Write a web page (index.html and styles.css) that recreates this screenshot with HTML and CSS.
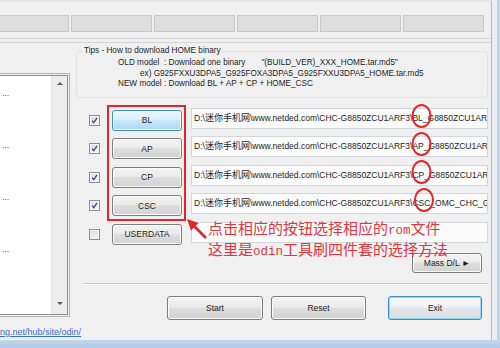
FILE: index.html
```html
<!DOCTYPE html>
<html lang="zh">
<head>
    <meta charset="UTF-8">
    <title>Odin3</title>
    <link rel="stylesheet" href="styles.css">
</head>
<body>
    <div class="window">
        <div class="client">
            <div class="ports">
                <div class="port"></div>
                <div class="port"></div>
                <div class="port"></div>
                <div class="port"></div>
                <div class="port"></div>
                <div class="port"></div>
            </div>
            <div class="tabline"></div>
            <div class="main">
                <div class="logside">
                    <div class="logframe">
                        <div class="loglist">
                            <div class="logtext">
                                <div class="logline">...</div>
                                <div class="logline">...</div>
                                <div class="logline">...</div>
                                <div class="logline">...</div>
                            </div>
                            <div class="scrollbar">
                                <span class="arrow up"></span>
                                <span class="arrow down"></span>
                            </div>
                        </div>
                    </div>
                    <a class="hublink">ng.net/hub/site/odin/</a>
                </div>
                <div class="fileside">
                    <fieldset class="tips">
                        <legend>Tips - How to download HOME binary</legend>
                        <div class="tip">OLD model&nbsp; : Download one binary<span class="quoted">"(BUILD_VER)_XXX_HOME.tar.md5"</span></div>
                        <div class="tip ex">ex) G925FXXU3DPA5_G925FOXA3DPA5_G925FXXU3DPA5_HOME.tar.md5</div>
                        <div class="tip">NEW model : Download BL + AP + CP + HOME_CSC</div>
                    </fieldset>
                    <div class="files">
                        <div class="filerow">
                            <span class="check"><svg viewBox="0 0 11 11"><path d="M2.6 5.6 L4.6 8.2 L8.6 2.4"/></svg></span>
                            <button class="btn hot">BL</button>
                            <div class="path">D:\<span class="cjk">迷你手机网</span>\www.netded.com\CHC-G8850ZCU1ARF3\BL_G8850ZCU1AR</div>
                        </div>
                        <div class="filerow">
                            <span class="check"><svg viewBox="0 0 11 11"><path d="M2.6 5.6 L4.6 8.2 L8.6 2.4"/></svg></span>
                            <button class="btn">AP</button>
                            <div class="path">D:\<span class="cjk">迷你手机网</span>\www.netded.com\CHC-G8850ZCU1ARF3\AP_G8850ZCU1AR</div>
                        </div>
                        <div class="filerow">
                            <span class="check"><svg viewBox="0 0 11 11"><path d="M2.6 5.6 L4.6 8.2 L8.6 2.4"/></svg></span>
                            <button class="btn">CP</button>
                            <div class="path">D:\<span class="cjk">迷你手机网</span>\www.netded.com\CHC-G8850ZCU1ARF3\CP_G8850ZCU1AR</div>
                        </div>
                        <div class="filerow">
                            <span class="check"><svg viewBox="0 0 11 11"><path d="M2.6 5.6 L4.6 8.2 L8.6 2.4"/></svg></span>
                            <button class="btn">CSC</button>
                            <div class="path">D:\<span class="cjk">迷你手机网</span>\www.netded.com\CHC-G8850ZCU1ARF3\CSC_OMC_CHC_G</div>
                        </div>
                        <div class="filerow">
                            <span class="check off"></span>
                            <button class="btn">USERDATA</button>
                            <div class="path"></div>
                        </div>
                    </div>
                    <div class="massrow"><button class="btn mass">Mass D/L &#9658;</button></div>
                    <div class="sep"></div>
                    <div class="actions">
                        <button class="btn action start">Start</button>
                        <button class="btn action reset">Reset</button>
                        <button class="btn action exit">Exit</button>
                    </div>
                </div>
            </div>
        </div>
    </div>

    <div class="note">点击相应的按钮选择相应的<span class="latin">rom</span>文件<br>这里是<span class="latin">odin</span>工具刷四件套的选择方法</div>

    <svg class="marks" viewBox="0 0 500 348">
        <rect x="108" y="106" width="77" height="114"/>
        <ellipse cx="421.5" cy="116" rx="9" ry="11"/>
        <ellipse cx="421.5" cy="144" rx="9" ry="11"/>
        <ellipse cx="421.5" cy="172" rx="9" ry="11"/>
        <ellipse cx="424" cy="200" rx="9" ry="11"/>
        <path class="shaft" d="M206 238 L194 226"/>
        <polygon points="187,219 198.5,223 191,230.5"/>
    </svg>
</body>
</html>
```

FILE: styles.css
```css
* {
    box-sizing: border-box;
}

html, body {
    margin: 0;
    width: 500px;
    height: 348px;
    overflow: hidden;
}

body {
    position: relative;
    font-family: "Liberation Sans", "Noto Sans CJK SC", sans-serif;
    font-size: 8.5px;
    color: #1e1e1e;
}

.window {
    width: 500px;
    height: 348px;
    background:
        linear-gradient(#c2d6ed, #b3cbe6) bottom / 100% 8px no-repeat,
        linear-gradient(to right, #eceef1 497px, #bdd3eb 497px);
}

.client {
    width: 492px;
    height: 340px;
    background: #f0f0f0;
    border-right: 1px solid #b9b9b9;
    border-top: 2px solid #e6e6e6;
    overflow: hidden;
}

/* com port boxes */
.ports {
    display: flex;
    gap: 2px;
    margin: 13px 0 0 -12px;
}

.port {
    flex: none;
    width: 81px;
    height: 17px;
    background: #dedede;
    border: 1px solid #c8c8c8;
}

.tabline {
    height: 5px;
    margin-top: 6px;
    border-top: 1px solid #d4d4d4;
    border-bottom: 1px solid #d4d4d4;
}

.main {
    display: flex;
}

/* log list on the left */
.logside {
    width: 76px;
    flex: none;
    display: flex;
    flex-direction: column;
}

.logframe {
    height: 244px;
    margin: 30px 6px 0 -10px;
    padding: 1px;
    border: 1px solid #b3b3b3;
}

.loglist {
    height: 100%;
    display: flex;
    background: #fff;
    border: 1px solid #8f8f8f;
}

.logtext {
    flex: 1;
    padding: 12px 0 0 9px;
    color: #444;
}

.logline {
    height: 10px;
    line-height: 10px;
    margin-bottom: 42px;
}

.scrollbar {
    width: 16px;
    display: flex;
    flex-direction: column;
    justify-content: space-between;
    align-items: center;
    padding: 6px 0 9px;
    background: #ededed;
    border-left: 1px solid #e2e2e2;
}

.arrow {
    width: 0;
    height: 0;
    border-left: 3px solid transparent;
    border-right: 3px solid transparent;
}

.arrow.up {
    border-bottom: 3px solid #5a5a5a;
}

.arrow.down {
    border-top: 3px solid #5a5a5a;
}

.hublink {
    margin-top: 10px;
    font-size: 9px;
    color: #3a6cc8;
    text-decoration: underline;
    white-space: nowrap;
}

/* file selection side */
.fileside {
    flex: 1;
    display: flex;
    flex-direction: column;
}

.tips {
    margin: 3px 3px 0 0;
    padding: 2px 0 7px 6px;
    border: 1px solid #dde3e8;
    border-radius: 3px;
    min-width: 0;
    font-size: 8.2px;
}

.tips legend {
    padding: 0 1px;
    line-height: 10px;
}

.tip {
    margin-left: 35px;
    line-height: 10.5px;
    white-space: nowrap;
}

.tip.ex {
    margin-left: 57px;
}

.quoted {
    margin-left: 16px;
}

.files {
    margin-top: 12px;
}

.filerow {
    display: flex;
    align-items: flex-start;
    height: 21px;
}

.filerow + .filerow {
    margin-top: 7.5px;
}

.check {
    flex: none;
    width: 11px;
    height: 11px;
    margin: 5px 0 0 13px;
    border: 1px solid #8e8f8f;
    background: linear-gradient(135deg, #dcdcdc, #f6f6f6);
    box-shadow: inset 0 0 0 1px #f4f4f4;
}

.check svg {
    display: block;
    width: 9px;
    height: 9px;
    fill: none;
    stroke: #2b4c8f;
    stroke-width: 1.6;
}

.btn {
    font: inherit;
    color: #1e1e1e;
    padding: 0;
    border: 1px solid #7d7d7d;
    border-radius: 3px;
    background: linear-gradient(#f3f3f3, #ebebeb 45%, #dedede 50%, #d2d2d2);
    box-shadow: inset 0 0 0 1px #fbfbfb;
}

.btn.hot {
    border-color: #3c8fc3;
    background: linear-gradient(#eaf6fd, #d9f0fc 45%, #c4e7fb 50%, #aed9f2);
}

.filerow .btn {
    flex: none;
    width: 70px;
    height: 21px;
    margin-left: 12px;
}

.path {
    flex: none;
    width: 297px;
    height: 21px;
    margin: -2px 0 0 9px;
    padding: 2px 0 0 2px;
    background: #fbfbfb;
    border: 1px solid #d2d5d9;
    white-space: nowrap;
    overflow: hidden;
}

.cjk {
    font-size: 9px;
}

.massrow {
    display: flex;
    justify-content: flex-end;
    margin: 8px 9px 0 0;
}

.btn.mass {
    width: 70px;
    height: 20px;
}

.sep {
    margin: 10px 3px 0 7px;
    border-top: 1px solid #c9c9c9;
    border-bottom: 1px solid #fff;
}

.actions {
    display: flex;
    justify-content: flex-end;
    margin: 11px 9px 0 0;
}

.btn.action {
    height: 24px;
}

.start {
    width: 96px;
}

.reset {
    width: 95px;
    margin-left: 8px;
}

.exit {
    width: 94px;
    margin-left: 22px;
    border-color: #3c8fc3;
    background: linear-gradient(#f6f8fa, #eef1f4 45%, #e2e7eb 50%, #d8dfe5);
    box-shadow: inset 0 0 0 1px #8fd8f6;
}

/* red annotation drawn over the screenshot */
.note {
    position: absolute;
    left: 208px;
    top: 219px;
    font-family: "Noto Sans CJK SC", sans-serif;
    font-size: 15px;
    line-height: 18px;
    color: #e2363f;
    white-space: nowrap;
}

.note .latin {
    font-family: "Liberation Mono", monospace;
    font-size: 12.5px;
}

.marks {
    position: absolute;
    left: 0;
    top: 0;
    width: 500px;
    height: 348px;
    pointer-events: none;
    fill: none;
    stroke: #e3242b;
    stroke-width: 2;
}

.marks .shaft {
    stroke-width: 2.6;
}

.marks polygon {
    fill: #e3242b;
    stroke: none;
}
```
